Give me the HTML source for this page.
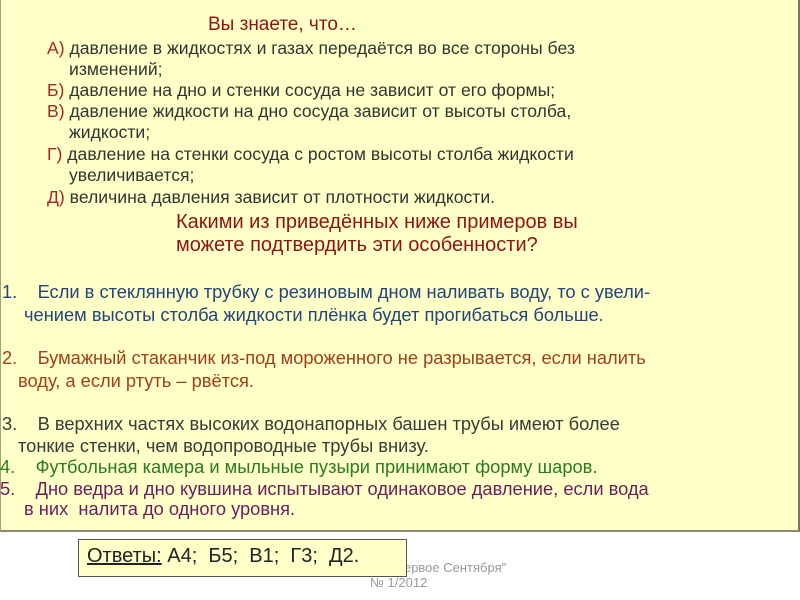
<!DOCTYPE html>
<html><head><meta charset="utf-8"><style>
body{margin:0;width:800px;height:600px;background:#fff;position:relative;overflow:hidden;font-family:"Liberation Sans","DejaVu Sans",sans-serif;}
#box{position:absolute;left:0;top:0;width:797px;height:530px;background:#ffffc8;border-right:2px solid #77775a;border-bottom:2px solid #8a8a70;border-left:1px solid #a0a080;}
.l{position:absolute;white-space:nowrap;font-size:17.6px;line-height:20px;color:#333;}
.r{color:#a02828}
.t{color:#8b1515;font-size:19px}
.k{color:#8b1515;font-size:20px}
.n{font-size:18.3px}
.b{color:#23457a}.o{color:#a0401a}.g{color:#2a7a22}.p{color:#6a1e5e}.d{color:#3a3a3a}
#ans{position:absolute;left:78px;top:539px;width:329px;height:38px;background:#ffffc8;border:1px solid #555;box-sizing:border-box;z-index:2}
.f{position:absolute;font-size:13px;color:#999;white-space:nowrap}
</style></head><body>
<div id="box"></div>
<div class="l t" style="left:208px;top:15px">Вы знаете, что…</div>
<div class="l" style="left:47px;top:38px"><span class="r">А)</span> давление в жидкостях и газах передаётся во все стороны без</div>
<div class="l" style="left:69px;top:59px">изменений;</div>
<div class="l" style="left:47px;top:80px"><span class="r">Б)</span> давление на дно и стенки сосуда не зависит от его формы;</div>
<div class="l" style="left:47px;top:101px"><span class="r">В)</span> давление жидкости на дно сосуда зависит от высоты столба,</div>
<div class="l" style="left:69px;top:122px">жидкости;</div>
<div class="l" style="left:47px;top:144px"><span class="r">Г)</span> давление на стенки сосуда с ростом высоты столба жидкости</div>
<div class="l" style="left:69px;top:165px">увеличивается;</div>
<div class="l" style="left:47px;top:187px"><span class="r">Д)</span> величина давления зависит от плотности жидкости.</div>
<div class="l k" style="left:176px;top:212px">Какими из приведённых ниже примеров вы</div>
<div class="l k" style="left:176px;top:235px">можете подтвердить эти особенности?</div>
<div class="l n b" style="left:2px;top:282px">1.&nbsp;&nbsp;&nbsp;&nbsp;Если в стеклянную трубку с резиновым дном наливать воду, то с увели-</div>
<div class="l n b" style="left:24px;top:305px">чением высоты столба жидкости плёнка будет прогибаться больше.</div>
<div class="l n o" style="left:2px;top:348px">2.&nbsp;&nbsp;&nbsp;&nbsp;Бумажный стаканчик из-под мороженного не разрывается, если налить</div>
<div class="l n o" style="left:18px;top:371px">воду, а если ртуть – рвётся.</div>
<div class="l n d" style="left:2px;top:414px">3.&nbsp;&nbsp;&nbsp;&nbsp;В верхних частях высоких водонапорных башен трубы имеют более</div>
<div class="l n d" style="left:18px;top:436px">тонкие стенки, чем водопроводные трубы внизу.</div>
<div class="l n g" style="left:0px;top:457px">4.&nbsp;&nbsp;&nbsp;&nbsp;Футбольная камера и мыльные пузыри принимают форму шаров.</div>
<div class="l n p" style="left:0px;top:479px">5.&nbsp;&nbsp;&nbsp;&nbsp;Дно ведра и дно кувшина испытывают одинаковое давление, если вода</div>
<div class="l n p" style="left:24px;top:499px">в них&nbsp; налита до одного уровня.</div>
<div class="f" style="left:390px;top:560px">"Первое Сентября"</div>
<div class="f" style="left:370px;top:575px">№ 1/2012</div>
<div id="ans"></div>
<div class="l" style="left:87px;top:546px;font-size:20px;color:#222;z-index:3"><u>Ответы:</u> А4;&nbsp; Б5;&nbsp; В1;&nbsp; Г3;&nbsp; Д2.</div>
</body></html>
